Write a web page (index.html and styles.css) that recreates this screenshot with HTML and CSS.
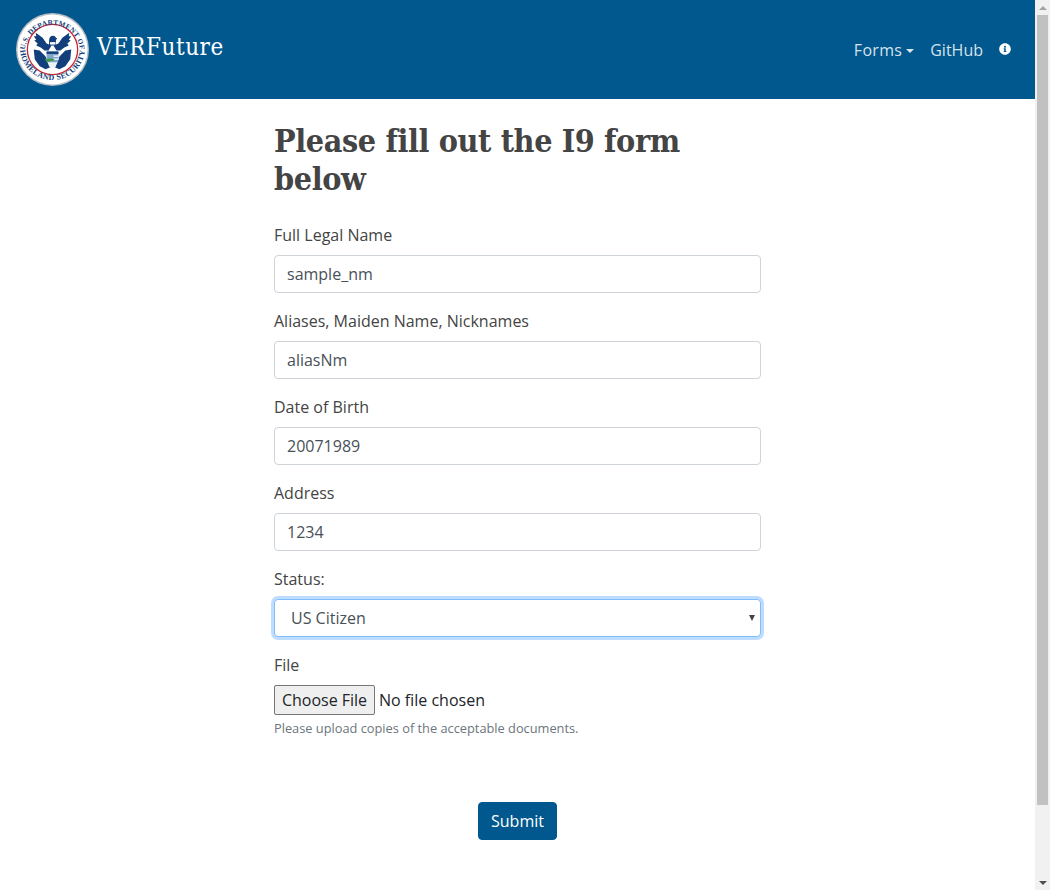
FILE: index.html
```html
<!DOCTYPE html>
<html lang="en">
<head>
<meta charset="utf-8">
<title>VERFuture</title>
<link rel="stylesheet" href="styles.css">
</head>
<body>
<div class="page">
<header class="navbar">
  <a class="brand" href="#">
    <svg class="seal" viewBox="0 0 74 74" width="73" height="73" aria-hidden="true">
      <defs>
        <path id="arcTop" d="M9 40 A28 28 0 0 1 65 40"/>
        <path id="arcBottom" d="M4 35 A33 33 0 0 0 70 35"/>
      </defs>
      <circle cx="37" cy="37" r="37" fill="#b9bec4"/>
      <circle cx="37" cy="37" r="35.500" fill="#fff"/>
      <circle cx="37" cy="37" r="25.500" fill="#fff" stroke="#c8242f" stroke-width="1.300"/>
      <text class="seal-text"><textPath href="#arcTop" startOffset="50%" text-anchor="middle">U.S. DEPARTMENT OF</textPath></text>
      <text class="seal-text seal-text-low"><textPath href="#arcBottom" startOffset="50%" text-anchor="middle">HOMELAND SECURITY</textPath></text>
      <path fill="#123f7c" d="M36 33L31 31L27 25L20 20L20.500 23.500L18 23.500L20.500 27L18.500 28L22 31L20.500 33L25 35L29 38L33 38Z"/>
      <path fill="#123f7c" d="M38 33L43 31L47 25L54 20L53.500 23.500L56 23.500L53.500 27L55.500 28L52 31L53.500 33L49 35L45 38L41 38Z"/>
      <path fill="#123f7c" d="M33.500 28C33.500 25 35 23 37.500 23C39 23 40 24 40.500 25L42 26L40.500 27L40.500 33L33.500 33Z"/>
      <path fill="#fff" d="M34.500 29.500h5.500v2.500h-5.500z"/>
      <path fill="#123f7c" d="M18 37L24 38L30 44L32 50L35 55L30 57L24 54L19 47Z"/>
      <path fill="#123f7c" d="M56 37L50 38L44 44L42 50L39 55L44 57L50 54L55 47Z"/>
      <path fill="#7fa6c9" d="M31 39h12v9l-3 4h-6l-3-4z"/>
      <path fill="#123f7c" d="M31 39h12v2.500H31z"/>
      <path fill="#fff" d="M38 43h5v1.300h-5zM38 46h5v1.300h-5z"/>
      <path fill="#3f9a4a" d="M29.500 47l5-1.200 4.500 1.200-1 1.500-3.500.5-2.500 1.500-1.500-1.500z"/>
      <path fill="#eef2f5" d="M32 50h10l-2 5h-6z"/>
    </svg>
    <span class="brand-name">VERFuture</span>
  </a>
  <nav class="nav-links">
    <a class="nav-link nav-forms" href="#">Forms<span class="caret"></span></a>
    <a class="nav-link" href="#">GitHub</a>
    <a class="nav-link info" href="#" aria-label="Info">
      <svg viewBox="0 0 512 512" width="12" height="12"><path fill="#fff" d="M256 8C119 8 8 119 8 256s111 248 248 248 248-111 248-248S393 8 256 8zm0 110c23.200 0 42 18.800 42 42s-18.800 42-42 42-42-18.800-42-42 18.800-42 42-42zm56 254c0 6.600-5.400 12-12 12h-88c-6.600 0-12-5.400-12-12v-24c0-6.600 5.400-12 12-12h12v-64h-12c-6.600 0-12-5.400-12-12v-24c0-6.600 5.400-12 12-12h64c6.600 0 12 5.400 12 12v100h12c6.600 0 12 5.400 12 12v24z"/></svg>
    </a>
  </nav>
</header>
<main class="content">
  <h1 class="title">Please fill out the I9 form below</h1>
  <form class="form">
    <div class="group">
      <label class="label" for="name">Full Legal Name</label>
      <input class="control" id="name" type="text" value="sample_nm">
    </div>
    <div class="group">
      <label class="label" for="alias">Aliases, Maiden Name, Nicknames</label>
      <input class="control" id="alias" type="text" value="aliasNm">
    </div>
    <div class="group">
      <label class="label" for="dob">Date of Birth</label>
      <input class="control" id="dob" type="text" value="20071989">
    </div>
    <div class="group">
      <label class="label" for="addr">Address</label>
      <input class="control" id="addr" type="text" value="1234">
    </div>
    <div class="group">
      <label class="label" for="status">Status:</label>
      <div class="select-wrap">
        <select class="control select" id="status">
          <option>US Citizen</option>
          <option>Permanent Resident</option>
          <option>Work Visa</option>
        </select>
      </div>
    </div>
    <div class="group">
      <label class="label" for="file">File</label>
      <input class="file" id="file" type="file">
      <small class="help">Please upload copies of the acceptable documents.</small>
    </div>
    <div class="actions">
      <button class="submit" type="button">Submit</button>
    </div>
  </form>
</main>
</div>
<div class="scrollbar" aria-hidden="true">
  <div class="sb-btn"><span class="sb-up"></span></div>
  <div class="sb-thumb"></div>
  <div class="sb-track"></div>
  <div class="sb-btn"><span class="sb-down"></span></div>
</div>
</body>
</html>
```
FILE: styles.css
```css
* { box-sizing: border-box; }
html { overflow: hidden; }
body {
  margin: 0;
  height: 890px;
  display: flex;
  font-family: "Open Sans", sans-serif;
  font-size: 16px;
  line-height: 1.5;
  color: #444;
  background: #fff;
}
.page { flex: 1; min-width: 0; }
.navbar {
  height: 99px;
  background: #00588e;
  display: flex;
  align-items: center;
  justify-content: space-between;
  padding: 0 16px;
}
.brand {
  display: flex;
  align-items: center;
  gap: 8px;
  color: #fff;
  text-decoration: none;
}
.seal { display: block; flex: none; }
.seal-text {
  font-family: "Liberation Serif", serif;
  font-size: 7.400px;
  font-weight: 700;
  fill: #123f7c;
  letter-spacing: .2px;
}
.seal-text-low { font-size: 8px; letter-spacing: .4px; }
.brand-name {
  font-family: "DejaVu Serif Condensed", "DejaVu Serif", serif;
  font-size: 24px;
  line-height: 36px;
  letter-spacing: .5px;
  margin-top: -5px;
}
.nav-links { display: flex; align-items: center; }
.nav-link {
  color: rgba(255, 255, 255, .85);
  text-decoration: none;
  padding: 8px;
}
.nav-forms { letter-spacing: .3px; }
.caret {
  display: inline-block;
  margin-left: 4px;
  vertical-align: 3px;
  border-top: 4.800px solid;
  border-left: 4.800px solid transparent;
  border-right: 4.800px solid transparent;
}
.info { display: flex; margin-top: -2px; }
.content {
  width: 487px;
  margin-left: 274px;
  padding-top: 23px;
}
.title {
  margin: 0 0 24px;
  font-family: "DejaVu Serif Condensed", "DejaVu Serif", serif;
  font-size: 32px;
  font-weight: 700;
  line-height: 38.400px;
  letter-spacing: -.38px;
  color: #444;
}
.group { margin-bottom: 16px; }
.label { display: block; margin-bottom: 8px; }
.control {
  display: block;
  width: 100%;
  height: 38px;
  padding: 6px 12px;
  font: inherit;
  color: #495057;
  background: #fff;
  border: 1px solid #ced4da;
  border-radius: 4px;
}
.select-wrap { position: relative; }
.select-wrap::after {
  content: "";
  position: absolute;
  top: 16px;
  right: 6px;
  border-top: 6px solid #444;
  border-left: 3px solid transparent;
  border-right: 3px solid transparent;
}
.select {
  appearance: none;
  padding-left: 16px;
  border-color: #80bdff;
  box-shadow: 0 0 0 3px rgba(0, 123, 255, .25);
  outline: 0;
}
.file {
  display: block;
  width: 100%;
  height: 30px;
  font: inherit;
  color: #212529;
}
.file::file-selector-button {
  height: 30px;
  width: 101px;
  margin-right: 4px;
  padding: 0;
  font: inherit;
  color: #212529;
  background: #efefef;
  border: 1px solid #767676;
  border-radius: 2px;
}
.help {
  display: block;
  margin-top: 4px;
  font-size: 12.800px;
  line-height: 19.200px;
  color: #6c757d;
}
.actions {
  display: flex;
  justify-content: center;
  margin-top: 64px;
}
.submit {
  height: 38px;
  padding: 6px 12px;
  font: inherit;
  color: #fff;
  background: #00588e;
  border: 1px solid #00588e;
  border-radius: 4px;
}
.scrollbar {
  flex: none;
  width: 15px;
  height: 890px;
  display: flex;
  flex-direction: column;
  background: #f1f1f1;
}
.sb-btn {
  flex: none;
  height: 15px;
  display: flex;
  align-items: center;
  justify-content: center;
}
.sb-up {
  border-bottom: 4px solid #a3a3a3;
  border-left: 4px solid transparent;
  border-right: 4px solid transparent;
}
.sb-down {
  border-top: 4px solid #505050;
  border-left: 4px solid transparent;
  border-right: 4px solid transparent;
}
.sb-thumb {
  flex: none;
  height: 790px;
  margin: 0 2px;
  background: #c1c1c1;
}
.sb-track { flex: 1; }
```
